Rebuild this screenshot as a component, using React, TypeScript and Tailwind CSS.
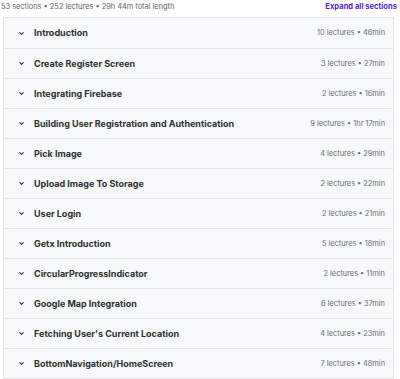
import { ChevronDown } from 'lucide-react'

const sections = [
  { title: 'Introduction', meta: '10 lectures • 46min' },
  { title: 'Create Register Screen', meta: '3 lectures • 27min' },
  { title: 'Integrating Firebase', meta: '2 lectures • 16min' },
  { title: 'Building User Registration and Authentication', meta: '9 lectures • 1hr 17min' },
  { title: 'Pick Image', meta: '4 lectures • 29min' },
  { title: 'Upload Image To Storage', meta: '2 lectures • 22min' },
  { title: 'User Login', meta: '2 lectures • 21min' },
  { title: 'Getx Introduction', meta: '5 lectures • 18min' },
  { title: 'CircularProgressIndicator', meta: '2 lectures • 11min' },
  { title: 'Google Map Integration', meta: '6 lectures • 37min' },
  { title: "Fetching User's Current Location", meta: '4 lectures • 23min' },
  { title: 'BottomNavigation/HomeScreen', meta: '7 lectures • 48min' },
]

export default function App() {
  return (
    <div className="w-[400px] h-[379px] overflow-hidden bg-white font-['Inter',sans-serif] text-[#2d2f31]">
      {/* Header */}
      <div className="flex items-center justify-between h-[17px] pl-[1px] pr-[3px] pb-[3px]">
        <span className="text-[7.4px] text-[#5f6367]">53 sections • 252 lectures • 29h 44m total length</span>
        <span className="text-[7.6px] font-bold text-[#5624d0]">Expand all sections</span>
      </div>

      {/* Sections */}
      <div className="ml-[3px] mr-[6px] border border-[#e4e6e8]">
        {sections.map((s, i) => (
          <div
            key={i}
            className={`flex items-center h-[30px] bg-[#f7f9fa] pl-[14px] pr-[8px] ${
              i > 0 ? 'border-t border-[#e4e6e8]' : ''
            }`}
          >
            <ChevronDown className="w-[7px] h-[7px] text-[#2d2f31]" strokeWidth={3.5} />
            <span className="ml-[9px] text-[9px] font-bold flex-1">{s.title}</span>
            <span className="text-[7.4px] text-[#6a6f73]">{s.meta}</span>
          </div>
        ))}
      </div>
    </div>
  )
}
